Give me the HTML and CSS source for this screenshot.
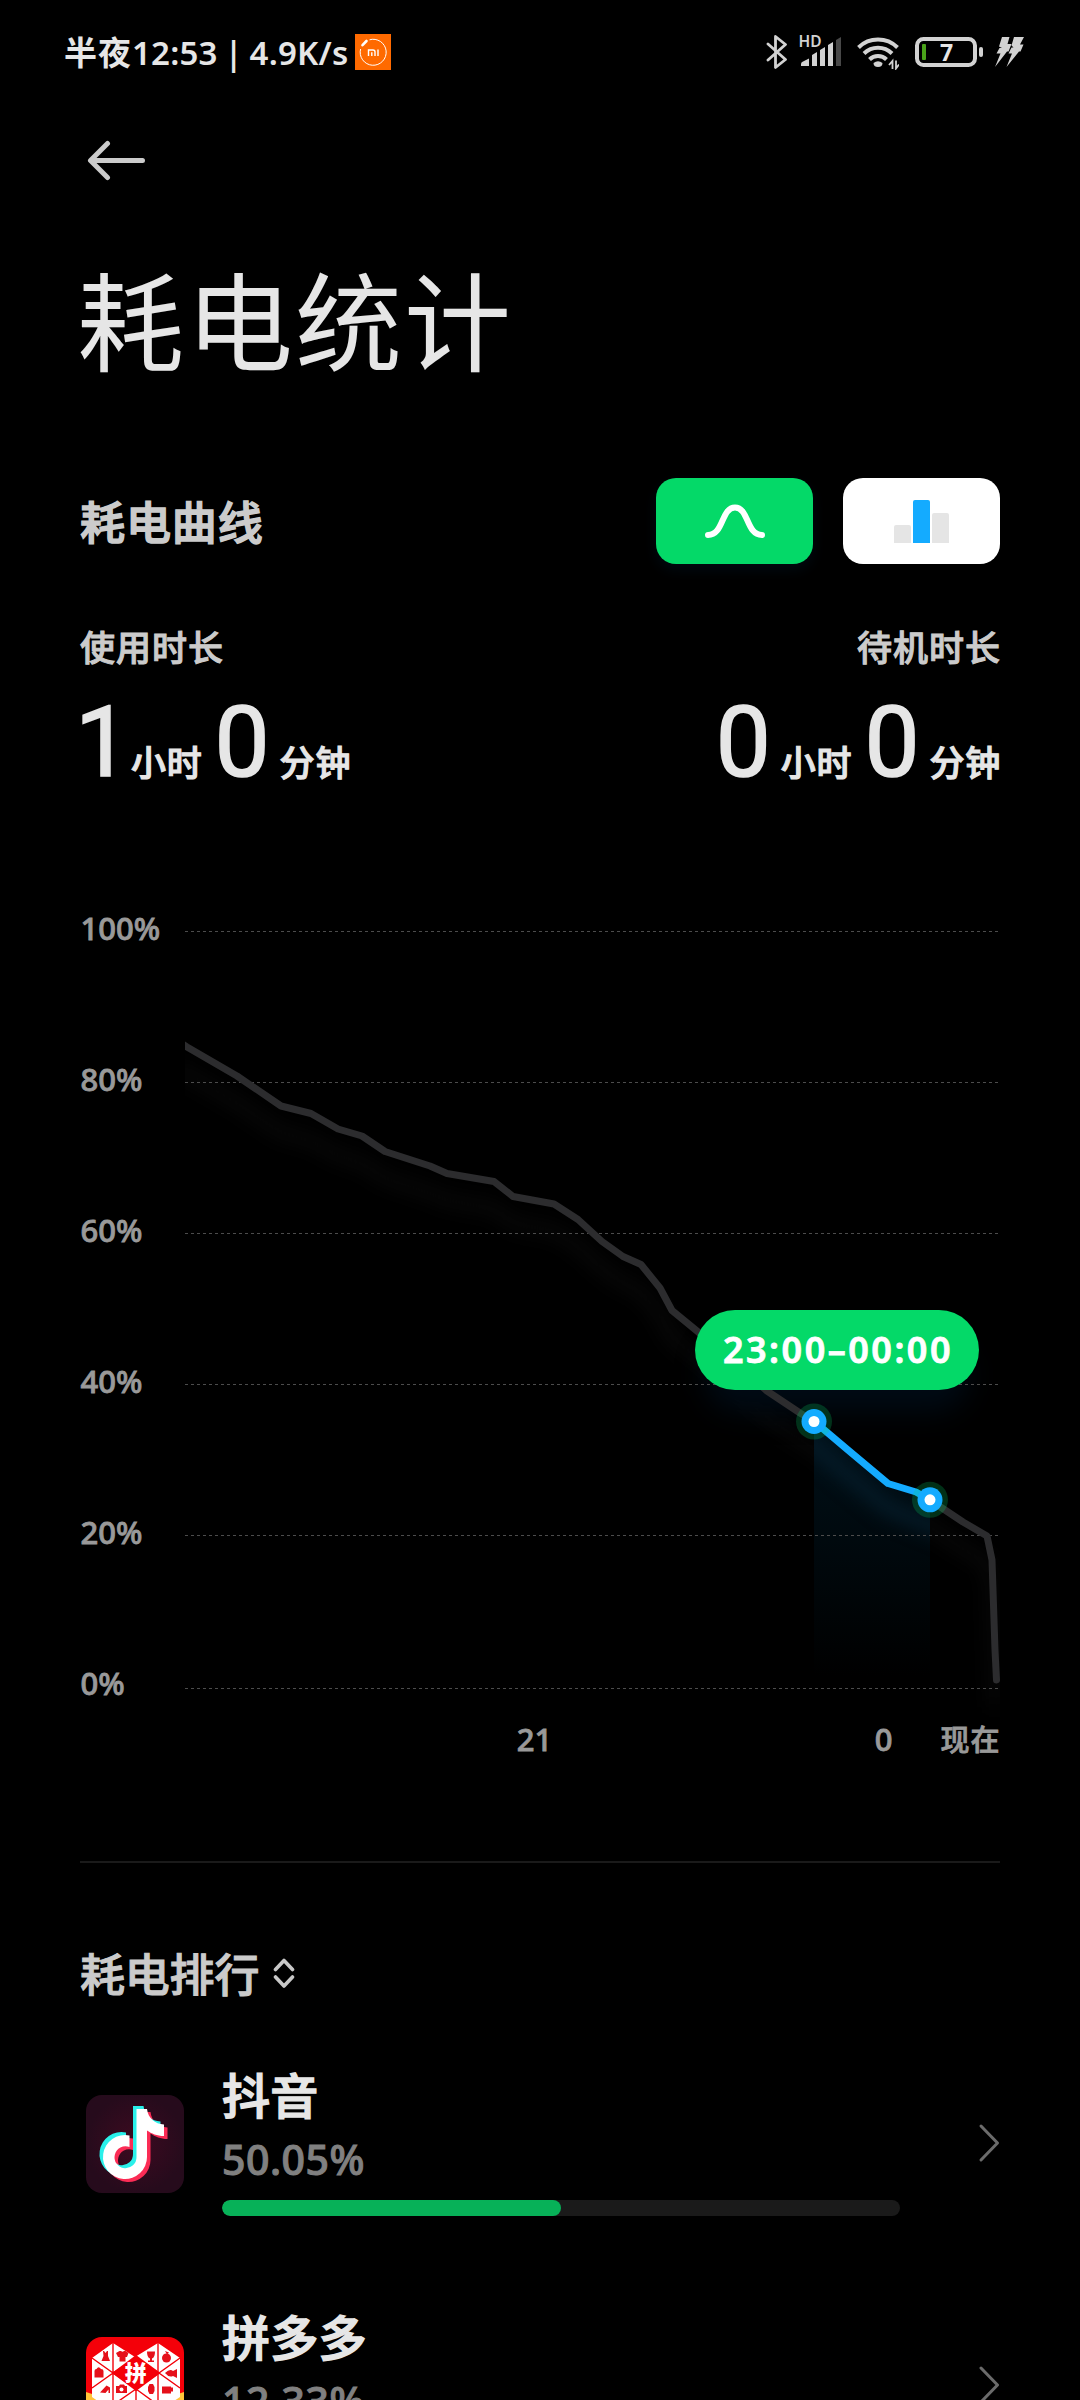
FILE: index.html
```html
<!DOCTYPE html>
<html lang="zh-CN">
<head>
<meta charset="utf-8">
<title>耗电统计</title>
<link rel="stylesheet" href="styles.css">
</head>
<body>
<header class="status">
  <div class="status-left">
    <span class="status-text"><span class="status-cjk">半夜</span>12:53 | 4.9K/s</span>
    <svg class="mi" width="36" height="36" viewBox="0 0 36 36">
      <rect width="36" height="36" fill="#ff6a00"/>
      <path d="M14.5 5.8A13 13 0 1 1 5.6 15" fill="none" stroke="#fff" stroke-width="1"/>
      <path d="M7.5 11.2L11.5 7" stroke="#fff" stroke-width="2.6" stroke-linecap="round"/>
      <path d="M13.5 22v-6h4.5q2 0 2 2v4M16.8 18.2V22M23 15.5V22" fill="none" stroke="#fff" stroke-width="1.4"/>
    </svg>
  </div>
  <div class="status-right">
    <svg width="21" height="36" viewBox="766 34 21 36"><path d="M768 44L785.500 59.500L775.500 67.500V36.500L785.500 44.500L768 60" fill="none" stroke="#d2d2d2" stroke-width="2.800" stroke-linejoin="round" stroke-linecap="round"/></svg>
    <svg class="signal" width="42" height="36" viewBox="799 34 42 36">
      <g fill="#d2d2d2"><path d="M801 66v-2q0-2 2-2.500l6-3V66z M812 66V55l5-3v14z M820 66V50l5-3v19z M828 66V45l5-3v24z"/></g>
      <path d="M836 66V40l5-3v29z" fill="#484848"/>
      <text x="798.500" y="47" class="hd">HD</text>
    </svg>
    <svg width="42" height="36" viewBox="857 34 42 36">
      <g fill="none" stroke="#d2d2d2" stroke-width="4"><path d="M858.500 47.500A28 28 0 0 1 897.500 47.500"/><path d="M864 53.500A20 20 0 0 1 892 53.500"/><path d="M869.500 59.500A12 12 0 0 1 886.500 59.500"/></g>
      <path d="M873.500 63q4.500-3.500 9 0q0 4-4.500 4t-4.500-4z" fill="#d2d2d2"/>
      <path d="M892.500 69V61l-3.500 4M896 60.500V68.500l3-4" fill="none" stroke="#d2d2d2" stroke-width="1.800"/>
    </svg>
    <svg width="68" height="36" viewBox="915 34 68 36">
      <rect x="917" y="39" width="58" height="26" rx="6.500" fill="none" stroke="#d2d2d2" stroke-width="4"/>
      <rect x="922" y="44" width="4" height="16" rx="1" fill="#4aa31a"/>
      <rect x="979" y="47" width="4" height="10" rx="2" fill="#d2d2d2"/>
      <text x="946.500" y="60.500" class="level">7</text>
    </svg>
    <svg width="30" height="36" viewBox="996 34 30 36"><path d="M1003 37h7.500l-2 7h4l-3 7.500h-1.500L996 67l5.500-13.500h-4l3-5.500h2.500l-3-1.500zM1015 37h10l-4 7.500h3.500l-3 7h-1.500L1007.500 67l5.500-13.500h-3.500l3-6h2l-2-2z" fill="#d2d2d2"/></svg>
  </div>
</header>

<nav class="nav">
  <svg width="58" height="42" viewBox="87 139 58 42"><path d="M107.500 143.500L90.500 160.500L107.500 177.500M91 160.500H142.500" fill="none" stroke="#cbcbcb" stroke-width="5" stroke-linecap="round" stroke-linejoin="round"/></svg>
</nav>

<main class="page">
  <h1 class="title">耗电统计</h1>

  <section class="curve-head">
    <h2 class="heading">耗电曲线</h2>
    <div class="tabs">
      <button class="tab tab-on" aria-label="曲线">
        <svg width="157" height="86" viewBox="0 0 157 86"><path d="M52 57C68 57 65 29.500 79 29.500S90 57 106 57" fill="none" stroke="#fff" stroke-width="6" stroke-linecap="round"/></svg>
      </button>
      <button class="tab" aria-label="柱状">
        <svg width="157" height="86" viewBox="0 0 157 86"><path d="M51 65V49q0-2 2-2H66q2 0 2 2V65zM89 65V37q0-2 2-2h13q2 0 2 2V65z" fill="#e5e5e5"/><path d="M70 65V24q0-2 2-2H85q2 0 2 2V65z" fill="#14abff"/></svg>
      </button>
    </div>
  </section>

  <section class="stats">
    <div class="stat">
      <span class="label">使用时长</span>
      <div class="value"><span class="num num-one">1</span><span class="unit">小时</span><span class="num">0</span><span class="unit">分钟</span></div>
    </div>
    <div class="stat stat-right">
      <span class="label">待机时长</span>
      <div class="value"><span class="num">0</span><span class="unit">小时</span><span class="num">0</span><span class="unit">分钟</span></div>
    </div>
  </section>

  <svg class="chart" width="920" height="900" viewBox="80 880 920 900">
    <defs>
      <linearGradient id="area" gradientUnits="userSpaceOnUse" x1="0" y1="1421" x2="0" y2="1676"><stop offset="0" stop-color="#00111a"/><stop offset="1" stop-color="#000"/></linearGradient>
      <filter id="soft" color-interpolation-filters="sRGB" filterUnits="userSpaceOnUse" x="80" y="880" width="1000" height="900"><feGaussianBlur stdDeviation="9"/></filter>
      <filter id="glow" color-interpolation-filters="sRGB" filterUnits="userSpaceOnUse" x="80" y="880" width="1000" height="900"><feGaussianBlur stdDeviation="14"/></filter>
      <clipPath id="plot"><rect x="185" y="900" width="815" height="860"/></clipPath>
      <clipPath id="under"><path d="M814 1421.500L848 1450L888 1483.500L916 1492L930 1500V1676H814z"/></clipPath>
    </defs>
    <g clip-path="url(#plot)">
      <path class="curve-shadow" filter="url(#soft)" transform="translate(0 27)" d="M175 1040L187 1047L237 1076L281 1106L311 1113.500L338 1129L362 1136L385 1151.500L430 1166L447 1173.500L494 1181.500L513 1196.500L554 1204L578 1219.500L602 1241.500L623 1256.500L641 1264.500L660 1288L672 1310.500L697 1331L767 1391L814 1421.500L848 1450L888 1483.500L916 1492L930 1500L963 1522L987 1536L992 1560L995 1650L996.500 1680"/>
    </g>
    <rect x="705" y="1340" width="264" height="72" rx="36" fill="#000a14" filter="url(#glow)"/>
    <g clip-path="url(#under)">
      <rect x="814" y="1421" width="116" height="255" fill="url(#area)"/>
      <path d="M780 1418L814 1446L848 1475L888 1508L930 1525L960 1538" fill="none" stroke="#051d2b" stroke-width="14" filter="url(#soft)"/>
    </g>
    <path class="grid" d="M185 931.500H998M185 1082.500H998M185 1233.500H998M185 1384.500H998M185 1535.500H998M185 1688.500H998"/>
    <g clip-path="url(#plot)">
      <path class="curve" d="M183 1044.500L187 1047L237 1076L281 1106L311 1113.500L338 1129L362 1136L385 1151.500L430 1166L447 1173.500L494 1181.500L513 1196.500L554 1204L578 1219.500L602 1241.500L623 1256.500L641 1264.500L660 1288L672 1310.500L697 1331L767 1391L800 1413L814 1421.500M930 1500L963 1522L987 1536L992 1560L995 1650L996.500 1680"/>
    </g>
    <path class="curve curve-on" d="M814 1421.500L822 1428L848 1450L888 1483.500L916 1492L930 1500"/>
    <g class="dot"><circle cx="814" cy="1421.500" r="18"/><circle cx="814" cy="1421.500" r="12.500"/><circle cx="814" cy="1421.500" r="5.500"/></g>
    <g class="dot"><circle cx="930" cy="1499.800" r="18"/><circle cx="930" cy="1499.800" r="12.500"/><circle cx="930" cy="1499.800" r="5.500"/></g>
    <rect x="695" y="1310" width="284" height="80" rx="40" fill="#04d968"/>
    <text class="tip" x="838" y="1363">23:00–00:00</text>
    <g class="axis">
      <text x="80.500" y="940">100%</text><text x="80.500" y="1091">80%</text><text x="80.500" y="1242">60%</text><text x="80.500" y="1393">40%</text><text x="80.500" y="1544">20%</text><text x="80.500" y="1695">0%</text>
      <text class="mid" x="534.500" y="1750.500">21</text><text class="mid" x="883.500" y="1750.500">0</text><text class="now" x="1000.500" y="1750.500">现在</text>
    </g>
  </svg>

  <section class="rank">
    <div class="rank-head">
      <h2 class="heading">耗电排行</h2>
      <svg width="22" height="32" viewBox="0 0 22 32"><path d="M2.500 12.500L11 3.500L19.500 12.500M2.500 20L11 29L19.500 20" fill="none" stroke="#c8c8c8" stroke-width="3.600" stroke-linecap="round" stroke-linejoin="round"/></svg>
    </div>

    <article class="app">
      <svg class="icon" width="98" height="98" viewBox="0 0 98 98">
        <defs>
          <radialGradient id="plum"><stop offset="0" stop-color="#3d0a20"/><stop offset="1" stop-color="#260b1c"/></radialGradient>
          <path id="note" d="M52 14H61C62 23 69 29 78 29.500V41C71 41 65.500 38.500 61 35.500V62A22 22 0 1 1 43.500 40.500V52A11 11 0 1 0 50.500 62V14z"/>
        </defs>
        <rect width="98" height="98" rx="16" fill="url(#plum)"/>
        <use href="#note" x="3.500" y="3" fill="#fb2c55"/>
        <use href="#note" x="-3.500" y="-3" fill="#2af0ea"/>
        <use href="#note" fill="#fff"/>
      </svg>
      <div class="info">
        <span class="name">抖音</span>
        <span class="percent">50.05%</span>
        <div class="bar"><div class="fill" style="width:50.05%"></div></div>
      </div>
      <svg class="go" width="22" height="40" viewBox="0 0 22 40"><path d="M3 3L19.500 20L3 37" fill="none" stroke="#6b6b6b" stroke-width="3" stroke-linecap="round" stroke-linejoin="round"/></svg>
    </article>

    <article class="app">
      <svg class="icon" width="98" height="98" viewBox="0 0 98 98">
        <defs><clipPath id="tile"><rect width="98" height="98" rx="16"/></clipPath></defs>
        <g clip-path="url(#tile)">
          <rect width="98" height="98" fill="#f40009"/>
          <path d="M0 55Q49 74 98 55V98H0z" fill="#ffc53a"/>
          <path d="M6 21L27 6L49 20L72 6L94 21V60L49 90L6 60z" fill="#fff"/>
          <path d="M50 18L74.500 36L50 54L26 36z" fill="#f40009"/>
          <path d="M27 6V66M72 6V66M6 21L27 36L6 51M94 21L73 36L94 51M27 36L49 21M73 36L50 21M27 36L50 52L72 68M73 36L50 52L27 68M50 52V68" stroke="#f40009" stroke-width="1.400" fill="none"/>
          <g fill="#e5101a">
            <path d="M17 14h1l1.500 2 1.500-2h1v5l2 5h-8.500l2-5zM30 16l3.500-2h1.500q1.500 1.500 3 0h1.500l3 2-1.500 4h-1.500v4.500h-6V20h-1.500zM61 14.500h8q0 6-3 7v2h2v1.500h-6v-1.500h2v-2q-3-1-3-7z"/>
            <circle cx="80.500" cy="21" r="4.500"/><path d="M79 14l4 1.500-2 2z"/>
            <path d="M8.500 34q0-2 2-2q2-3.500 4.500 0q2.500 0 2.500 2v6.500h-9zM79 36q5-5 8-2l4-2v9l-4-2q-4 2-8-3zM14 55.500l6.500-7 3.500 2v5.500h-1.500v-3.500l-3 3.500zM30 49h3l1-1.500h4l1 1.500h2v7H30zM62 50l1.500-3h3.500l1.500 3v4l-1.500 3h-3.500l-1.500-3zM76 49.500h9v1h2v4h-2v2h-9z"/>
          </g>
          <circle cx="35.500" cy="52.500" r="2" fill="#fff"/>
          <text x="49.800" y="44" class="pin">拼</text>
        </g>
      </svg>
      <div class="info">
        <span class="name">拼多多</span>
        <span class="percent">12.33%</span>
        <div class="bar"><div class="fill" style="width:12.33%"></div></div>
      </div>
      <svg class="go" width="22" height="40" viewBox="0 0 22 40"><path d="M3 3L19.500 20L3 37" fill="none" stroke="#6b6b6b" stroke-width="3" stroke-linecap="round" stroke-linejoin="round"/></svg>
    </article>
  </section>
</main>
</body>
</html>
```
FILE: styles.css
```css
* { box-sizing: border-box; }
html { height: 2400px; overflow: hidden; background: #000; }
body {
  margin: 0;
  width: 1080px;
  height: 2400px;
  overflow: hidden;
  background: #000;
  color: #e6e6e6;
  font-family: "Noto Sans", "Noto Sans CJK SC", sans-serif;
}
svg { display: block; flex: none; }
h1, h2 { margin: 0; }

.status {
  display: flex;
  justify-content: space-between;
  height: 104px;
  padding: 0 55px 0 64px;
  align-items: center;
}
.status-left { display: flex; align-items: center; gap: 8px; }
.status-text { width: 283px; font-size: 33px; font-weight: 600; line-height: 44px; letter-spacing: .2px; word-spacing: -2px; white-space: nowrap; }
.status-cjk { font-family: "Noto Sans CJK SC", sans-serif; font-weight: 700; letter-spacing: 1px; }
.status-right { display: flex; }
.status-right svg + svg { margin-left: 12px; }
.status-right svg:nth-child(3), .status-right svg:nth-child(4) { margin-left: 16px; }
.signal { overflow: visible; }
.hd { font: 600 15.5px/20px "Noto Sans", sans-serif; fill: #d2d2d2; }
.level { font: 700 23px "Noto Sans", sans-serif; fill: #e6e6e6; text-anchor: middle; }

.nav { height: 112px; padding: 35px 0 0 87px; }

.page { height: 2184px; padding: 0 80px; overflow: hidden; }
.title {
  height: 262px;
  margin-left: -3px;
  padding-top: 22px;
  font-size: 107px;
  font-weight: 400;
  line-height: 158px;
  letter-spacing: 2px;
  font-family: "Noto Sans CJK SC", sans-serif;
}

.curve-head { display: flex; justify-content: space-between; align-items: center; height: 86px; }
.heading {
  font: 500 45px/66px "Noto Sans CJK SC", sans-serif;
  letter-spacing: .9px;
  color: #cbcbcb;
  -webkit-text-stroke: 1.5px #cbcbcb;
}
.rank-head .heading { letter-spacing: -.2px; -webkit-text-stroke-width: 1px; }
.tabs { display: flex; gap: 30px; }
.tab { width: 157px; height: 86px; padding: 0; border: 0; border-radius: 20px; background: #fff; }
.tab-on { background: #04d968; box-shadow: 0 6px 14px rgba(0, 30, 50, .35); }

.stats { display: flex; justify-content: space-between; height: 316px; padding-top: 56px; }
.stat { display: flex; flex-direction: column; }
.stat-right { align-items: flex-end; margin-right: -1px; }
.label { font: 500 35px/52px "Noto Sans CJK SC", sans-serif; letter-spacing: 1px; color: #cbcbcb; -webkit-text-stroke: 1px #cbcbcb; }
.value { display: flex; align-items: baseline; margin-top: 13px; line-height: 116px; }
.num { width: 55px; margin: 0 10px 0 12px; font: 400 98px/116px Roboto, sans-serif; -webkit-text-stroke: 1.6px #e6e6e6; }
.num:first-child { margin-left: 0; }
.num-one { width: 51px; margin-right: 0; text-indent: -5px; }
.unit { font: 500 35px/52px "Noto Sans CJK SC", sans-serif; letter-spacing: .8px; -webkit-text-stroke: 1.1px #e6e6e6; }

.chart { overflow: visible; }
.grid { stroke: #4c4c4c; stroke-width: 1; stroke-dasharray: 3 3; fill: none; }
.curve { fill: none; stroke: #2c2c2e; stroke-width: 7; stroke-linejoin: round; stroke-linecap: round; }
.curve-on { stroke: #14abff; stroke-linecap: butt; }
.curve-shadow { fill: none; stroke: #090909; stroke-width: 12; }
.dot circle:nth-child(1) { fill: #04d968; fill-opacity: .22; }
.dot circle:nth-child(2) { fill: #14abff; }
.dot circle:nth-child(3) { fill: #fff; }
.tip { font: 600 36px "Noto Sans", sans-serif; fill: #fff; stroke: #fff; stroke-width: .8px; text-anchor: middle; letter-spacing: 2.5px; }
.axis { font: 500 31px "Noto Sans", sans-serif; fill: #999; stroke: #999; stroke-width: .8px; }
.mid { text-anchor: middle; }
.now { font: 500 29px "Noto Sans CJK SC", sans-serif; letter-spacing: 1px; text-anchor: end; }

.rank { margin-top: 81px; border-top: 2px solid #1a1a1a; }
.rank-head { display: flex; align-items: center; gap: 14px; height: 216px; padding-top: 4px; }
.app { display: flex; height: 242px; padding: 16px 0 0 6px; }
.info { flex: none; width: 678px; margin: -35px 78px 0 38px; display: flex; flex-direction: column; }
.name { font: 500 48px/66px "Noto Sans CJK SC", sans-serif; letter-spacing: .2px; -webkit-text-stroke: 1.5px #e6e6e6; }
.percent { margin-top: 5px; font-size: 41px; font-weight: 500; line-height: 56px; letter-spacing: .5px; color: #808080; -webkit-text-stroke: 1px #808080; }
.bar { height: 16px; margin-top: 13px; border-radius: 8px; background: #1a1a1a; overflow: hidden; }
.fill { height: 16px; border-radius: 8px; background: #07b158; }
.go { margin-top: 28px; }
.pin { font: 900 22px "Noto Sans CJK SC", sans-serif; fill: #fff; text-anchor: middle; }
```
